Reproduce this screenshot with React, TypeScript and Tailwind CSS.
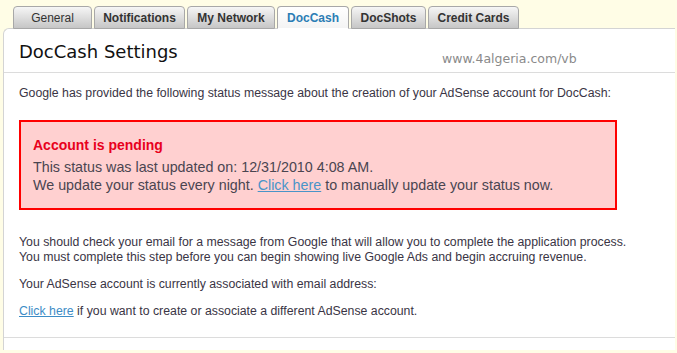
import React from 'react';

const tabs = [
  { label: 'General', width: 'w-[79px]', bold: false },
  { label: 'Notifications', width: 'w-[91px]', bold: true },
  { label: 'My Network', width: 'w-[88px]', bold: true },
  { label: 'DocCash', width: 'w-[72px]', bold: true, active: true },
  { label: 'DocShots', width: 'w-[75px]', bold: true },
  { label: 'Credit Cards', width: 'w-[91px]', bold: true },
];

const App: React.FC = () => {
  return (
    <div className="min-h-screen bg-[#fffde6] pt-[6px] pl-[3px] pr-[2px] pb-[3px] font-['Liberation_Sans',Arial,sans-serif]">
      {/* tab strip */}
      <div className="flex gap-[2px] pl-[10px] relative z-10 -mb-px">
        {tabs.map((t) => (
          <div
            key={t.label}
            className={`${t.width} h-[23px] flex items-center justify-center rounded-t-[4px] border border-[#a8a8a8] text-[12px] ${
              t.bold ? 'font-bold' : 'font-normal'
            } ${
              t.active
                ? 'bg-gradient-to-b from-white to-[#f4f4f4] text-[#2b7db5] border-b-white'
                : 'bg-gradient-to-b from-[#f6f6f6] to-[#c6c6c6] text-[#333]'
            }`}
          >
            {t.label}
          </div>
        ))}
      </div>

      {/* settings panel */}
      <div className="bg-white border-l border-t border-[#d4d4d4] rounded-tl-[6px] h-[322px] flex flex-col">
        <div className="relative h-[44px] border-b border-[#dcdcdc] flex items-center pl-[15px] pt-[3px] shrink-0">
          <h1 className="text-[18px] text-[#111] font-['DejaVu_Sans',Verdana,sans-serif] leading-none">DocCash Settings</h1>
          <span className="absolute left-[438px] top-[24px] text-[12.5px] text-[#8a8a8a] font-['DejaVu_Sans',Verdana,sans-serif] leading-none">
            www.4algeria.com/vb
          </span>
        </div>

        <div className="flex-1 pl-[15px] pt-[13px] text-[12.3px] leading-[15px] text-[#3a3545]">
          <p>Google has provided the following status message about the creation of your AdSense account for DocCash:</p>

          <div className="w-[598px] mt-[19px] border-2 border-[#ff0000] bg-[#ffd0d0] pt-[14px] pb-[14px] pl-[12px]">
            <h2 className="text-[14px] leading-[18px] font-bold text-[#e8001c]">Account is pending</h2>
            <div className="mt-[4px] text-[14.3px] leading-[18px] text-[#4a4550]">
              <p>This status was last updated on: 12/31/2010 4:08 AM.</p>
              <p>
                We update your status every night.{' '}
                <a href="#" className="text-[#4a94c8] underline">Click here</a> to manually update your status now.
              </p>
            </div>
          </div>

          <div className="mt-[25px]">
            <p>You should check your email for a message from Google that will allow you to complete the application process.</p>
            <p>You must complete this step before you can begin showing live Google Ads and begin accruing revenue.</p>
          </div>
          <p className="mt-[12px]">Your AdSense account is currently associated with email address:</p>
          <p className="mt-[12px]">
            <a href="#" className="text-[#3d8cc6] underline">Click here</a> if you want to create or associate a different AdSense account.
          </p>
        </div>

        <div className="h-[13px] border-t border-[#dcdcdc] shrink-0" />
      </div>
    </div>
  );
};

export default App;
